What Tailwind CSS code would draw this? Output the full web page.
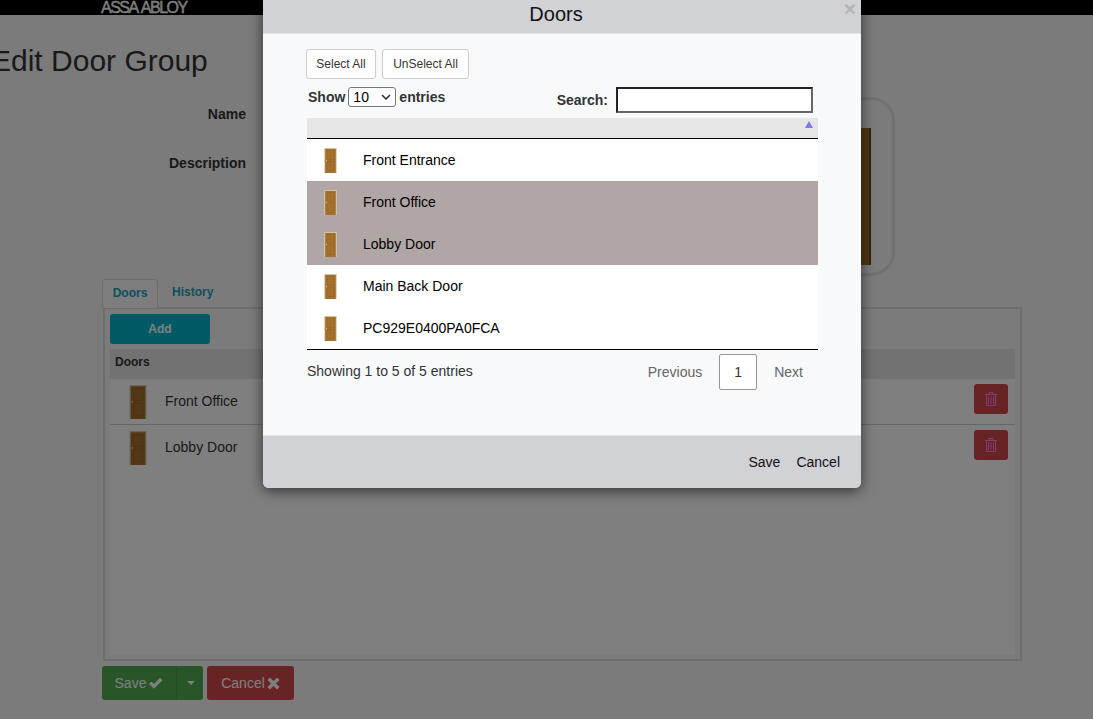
<!DOCTYPE html>
<html lang="en">
<head>
<meta charset="UTF-8">
<title>Edit Door Group</title>
<script src="https://cdn.jsdelivr.net/npm/@tailwindcss/browser@4"></script>
</head>
<body class="relative h-screen overflow-hidden bg-[#f6f7f8] font-['Liberation_Sans',Arial,sans-serif] text-[14px] text-[#333]">

<svg class="hidden">
  <symbol id="door" viewBox="0 0 16 32">
    <rect width="16" height="32" fill="#d8c8a8"/>
    <rect x="1.2" y="1.2" width="13.6" height="30.8" fill="#a4702e"/>
    <rect x="3.5" y="3.5" width="9" height="11" fill="none" stroke="#946327" stroke-width="0.6"/>
    <rect x="3.5" y="17" width="9" height="12" fill="none" stroke="#946327" stroke-width="0.6"/>
    <rect x="2.2" y="15" width="0.9" height="2" fill="#e0d4b8"/>
  </symbol>
  <symbol id="trash" viewBox="0 0 12 14">
    <path d="M0 2.5H12M4 2.5V.5H8V2.5M1.5 2.5V13.5H10.5V2.5M3.5 4.5V12M6 4.5V12M8.5 4.5V12" fill="none" stroke="currentColor"/>
  </symbol>
</svg>

<!-- page behind the dialog -->
<div class="h-[15px] overflow-hidden bg-black pl-[101px]">
  <span class="block -mt-[1px] text-[16px] leading-[18px] tracking-[-1.5px] text-white [word-spacing:2px] [-webkit-text-stroke:0.4px_white]">ASSA ABLOY</span>
</div>

<div class="flex h-[264px] justify-between pt-[28px] pr-[198px]">
  <div>
    <h1 class="-ml-[9px] text-[30px] leading-[36px] font-normal text-[#333]">Edit Door Group</h1>
    <div class="mt-[25px] w-[246px] text-right font-bold">
      <p class="leading-[20px]">Name</p>
      <p class="mt-[29px] leading-[20px]">Description</p>
    </div>
  </div>
  <div class="mt-[54px] flex h-[179px] w-[170px] items-end justify-end rounded-[24px] border-[3px] border-[#e2e2e2] pb-[8px] pr-[21px]">
    <div class="h-[137px] w-[60px] border-r-2 border-[#6f4a1e] bg-[#a4702e]"></div>
  </div>
</div>

<div class="pl-[102px] pr-[71px]">
  <div class="flex h-[28px] items-end text-[12px] font-bold text-[#17a2b8]">
    <div class="-mb-px flex h-[29px] w-[56px] items-center justify-center rounded-t border border-b-0 border-[#ddd] bg-[#fafafa] pb-[2px]">Doors</div>
    <div class="flex h-[28px] items-center pb-[2px] pl-[14px]">History</div>
  </div>
  <div class="ml-px flex h-[354px] flex-col border-2 border-[#dcdcdc] px-[5px] pt-[5px] pb-[4px]">
    <div class="flex h-[30px] w-[100px] shrink-0 items-center justify-center rounded-[3px] bg-[#00b4cc] text-[12px] font-bold text-white">Add</div>
    <div class="mt-[5px] flex h-[30px] shrink-0 items-center bg-[#e4e4e4] pb-[4px] pl-[5px] text-[12px] font-bold">Doors</div>
    <div class="flex-1 bg-white">
      <div class="flex h-[46px] items-center border-b border-[#ccc] pl-[19px] pr-[7px]">
        <svg class="h-[34px] w-[18px]"><use href="#door"/></svg>
        <span class="ml-[18px]">Front Office</span>
        <span class="ml-auto mt-[5px] flex h-[30px] w-[34px] items-center justify-center self-start rounded-[3px] bg-[#d04848] text-[#ff7be0]"><svg class="h-[14px] w-[12px]"><use href="#trash"/></svg></span>
      </div>
      <div class="flex h-[46px] items-center border-b border-transparent pl-[19px] pr-[7px]">
        <svg class="h-[34px] w-[18px]"><use href="#door"/></svg>
        <span class="ml-[18px]">Lobby Door</span>
        <span class="ml-auto mt-[5px] flex h-[30px] w-[34px] items-center justify-center self-start rounded-[3px] bg-[#d04848] text-[#ff7be0]"><svg class="h-[14px] w-[12px]"><use href="#trash"/></svg></span>
      </div>
    </div>
  </div>
  <div class="mt-[5px] flex gap-[4px] text-white">
    <div class="flex h-[34px] w-[101px] items-center rounded-[3px] bg-[#50ac50]">
      <span class="flex h-full w-[75px] items-center justify-center gap-[2px] border-r border-[#469a46]">Save
        <svg class="h-[13px] w-[15px]" viewBox="0 0 15 13"><path d="M1 7l2.5-2.5 2.5 2.5L12 .8 14.5 3.2 6 11.8z" fill="currentColor"/></svg>
      </span>
      <span class="ml-[10px] h-0 w-0 border-x-[4px] border-t-[4px] border-x-transparent border-t-white"></span>
    </div>
    <div class="flex h-[34px] w-[87px] items-center justify-center gap-[2px] rounded-[3px] bg-[#d04848]">Cancel
      <svg class="h-[13px] w-[13px]" viewBox="0 0 13 13"><path d="M3 .5L6.5 4 10 .5 12.5 3 9 6.5l3.5 3.5-2.5 2.5L6.5 9 3 12.5.5 10 4 6.5.5 3z" fill="currentColor"/></svg>
    </div>
  </div>
</div>

<div class="absolute inset-0 bg-black/50"></div>

<!-- Doors dialog -->
<div class="absolute left-[263px] top-0 w-[598px] overflow-hidden rounded-b-[6px] bg-[#f8f9fb] shadow-[0_3px_14px_rgba(0,0,0,0.6)]">
  <div class="relative h-[34px] border-b border-[#e4e5e8] bg-[#d1d2d6] pr-[12px] text-center text-[20px] leading-[28px] text-[#111]">
    Doors
    <span class="absolute right-[5px] top-0 text-[21px] leading-[18px] font-bold text-[#b4b4b8]">×</span>
  </div>

  <div class="h-[401px] px-[43px] pt-[15px]">
    <div class="flex gap-[6px] text-[12px] text-[#333]">
      <div class="flex h-[30px] w-[70px] items-center justify-center rounded-[3px] border border-[#ccc] bg-white">Select All</div>
      <div class="flex h-[30px] w-[87px] items-center justify-center rounded-[3px] border border-[#ccc] bg-white">UnSelect All</div>
    </div>

    <div class="mt-[8px] flex h-[26px] items-start pl-[2px] font-bold">
      <span class="mt-[1px] leading-[18px]">Show</span>
      <div class="relative ml-[3px] flex h-[20px] w-[48px] items-center rounded-[3px] border border-[#767676] bg-white pl-[4px] text-[14px] font-normal text-black">10
        <svg class="absolute right-[4px] top-[6px] h-[6px] w-[10px]" viewBox="0 0 10 6"><path d="M1 1l4 4 4-4" fill="none" stroke="#333" stroke-width="1.6"/></svg>
      </div>
      <span class="ml-[3px] mt-[1px] leading-[18px]">entries</span>
      <span class="ml-auto mt-[4px] leading-[18px]">Search:</span>
      <input type="text" class="ml-[8px] mr-[5px] h-[26px] w-[197px] border-2 border-t-[#222] border-l-[#222] border-r-[#666] border-b-[#666] bg-white">
    </div>

    <div class="mt-[5px] ml-[1px] w-[511px] border-b border-black text-[14px] text-black">
      <div class="relative h-[21px] border-b border-black bg-[#e6e6e6]">
        <span class="absolute right-[5px] top-[3px] h-0 w-0 border-x-[4px] border-b-[7px] border-x-transparent border-b-[#7b7be0]"></span>
      </div>
      <div class="flex h-[42px] items-center bg-white pl-[17px]"><svg class="h-[25px] w-[13px]"><use href="#door"/></svg><span class="ml-[26px]">Front Entrance</span></div>
      <div class="flex h-[42px] items-center bg-[#b0a6a6] pl-[17px]"><svg class="h-[25px] w-[13px]"><use href="#door"/></svg><span class="ml-[26px]">Front Office</span></div>
      <div class="flex h-[42px] items-center bg-[#b0a6a6] pl-[17px]"><svg class="h-[25px] w-[13px]"><use href="#door"/></svg><span class="ml-[26px]">Lobby Door</span></div>
      <div class="flex h-[42px] items-center bg-white pl-[17px]"><svg class="h-[25px] w-[13px]"><use href="#door"/></svg><span class="ml-[26px]">Main Back Door</span></div>
      <div class="flex h-[42px] items-center bg-white pl-[17px]"><svg class="h-[25px] w-[13px]"><use href="#door"/></svg><span class="ml-[26px]">PC929E0400PA0FCA</span></div>
    </div>

    <div class="ml-[1px] mt-[4px] flex w-[511px] items-start">
      <span class="mt-[8px] leading-[18px] text-[#333]">Showing 1 to 5 of 5 entries</span>
      <span class="ml-auto mt-[9px] leading-[18px] text-[#666]">Previous</span>
      <span class="ml-[17px] flex h-[36px] w-[38px] items-center justify-center rounded-[2px] border border-[#979797] bg-white text-[#333]">1</span>
      <span class="ml-[17px] mr-[15px] mt-[9px] leading-[18px] text-[#666]">Next</span>
    </div>
  </div>

  <div class="flex h-[53px] items-center justify-end gap-[16px] border-t border-[#e4e5e8] bg-[#d1d2d6] pr-[21px] text-[14px] text-[#111]">
    <span>Save</span>
    <span>Cancel</span>
  </div>
</div>

</body>
</html>
